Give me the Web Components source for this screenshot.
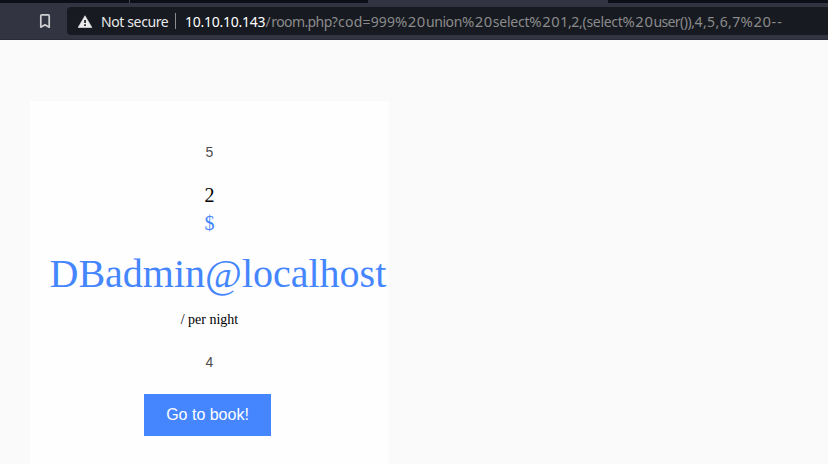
<!DOCTYPE html>
<html><head><meta charset="utf-8"><title>Room</title>
<style>html,body{margin:0;height:464px;overflow:hidden;background:#fafafa}</style></head>
<body><browser-window></browser-window>
<script>
class BrowserBar extends HTMLElement{constructor(){super();this.attachShadow({mode:'open'}).innerHTML=`
<style>
:host{display:flex;flex-direction:column;height:40px;background:#323442;font:14px "Noto Sans",sans-serif;color:#fff}
.tabs{display:flex;height:3px;background:#0d0e18;flex:none}
.tabs i{display:block;box-sizing:border-box;height:3px}
.a{width:130px;border-right:1px solid #444654}.b{width:238px}.c{width:240px;background:#323442}
.row{display:flex;height:37px;padding:4px 0 5px 38px;box-sizing:border-box;border-bottom:1px solid #2b2c38}
.bm{width:14px;height:28px;display:block;margin-right:15px}
.addr{flex:1;height:28px;box-sizing:border-box;background:#171a21;border-radius:4px 0 0 4px;display:flex;align-items:center;padding-left:11px;white-space:pre;overflow:hidden}
.addr svg{margin-right:8px;flex:none}
.addr>span{line-height:28px}
.sep{width:1px;height:16px;background:#8b8c90;flex:none;margin-right:9px}
.ns{width:74px;letter-spacing:-.38px;flex:none;color:#e8e8e8;padding-top:1px}
.h{width:80.5px;letter-spacing:-.26px;flex:none;padding-top:1px}
.p{color:#8b8b8b}
</style>
<div class="tabs"><i class="a"></i><i class="b"></i><i class="c"></i></div>
<div class="row"><svg class="bm" viewBox="0 0 14 28"><path d="M3.8 7.8h6.4q1 0 1 1v11.4L7 17.8l-4.2 2.4V8.8q0-1 1-1z" fill="none" stroke="#d0d0d3" stroke-width="1.7" stroke-linejoin="round"/></svg>
<div class="addr"><svg width="15" height="13" viewBox="0 0 15 13"><path d="M7 .7L13.9 12.5H.1z" fill="#ececec" stroke="#ececec" stroke-width=".6" stroke-linejoin="round"/><path d="M6.2 5h1.7v3H6.2zM6.2 9.3h1.7v1.6H6.2z" fill="#171a21"/></svg><span class="ns">Not secure</span><i class="sep"></i><span class="h">10.10.10.143</span><span class="p"><slot></slot></span></div></div>`}}
customElements.define('browser-bar',BrowserBar);
/* A run of address text; "gap" is its letter spacing in pixels. Escapes are set slightly larger. */
class UrlRun extends HTMLElement{constructor(){super();this.attachShadow({mode:'open'}).innerHTML='<style>:host{display:inline}:host(:not([gap])){font-size:14.8px;letter-spacing:.55px}</style><slot></slot>'}
connectedCallback(){const g=this.getAttribute('gap');if(g)this.style.letterSpacing=g+'px'}}
customElements.define('url-run',UrlRun);
class RoomCard extends HTMLElement{constructor(){super();this.attachShadow({mode:'open'}).innerHTML=`
<style>
:host{display:flex;flex-direction:column;align-items:center;width:359px;height:363px;box-sizing:border-box;background:#fefefe;padding:39px 20px 0;font:20px/28px "Liberation Serif",serif;color:#000;white-space:nowrap}
.n{font:14px/25px "Liberation Sans",sans-serif;color:#4d4d4d}
.t{margin-top:16px}.d{color:#4586ff}.u{font-size:40px;line-height:72px;align-self:flex-start;color:#4586ff;padding-top:1px;margin-left:-.5px}
.s{font-size:14px;line-height:20px}.m{margin-top:20px}
.btn{margin:19px 4px 0 0;width:127px;height:42px;background:#4586ff;color:#fff;font:16px/42px "Liberation Sans",sans-serif;text-align:center}
</style><div class="n">5</div><div class="t">2</div><div class="d">$</div><div class="u"><slot></slot></div><div class="s">/ per night</div><div class="n m">4</div><div class="btn">Go to book!</div>`}}
customElements.define('room-card',RoomCard);
class BrowserWindow extends HTMLElement{constructor(){super();this.attachShadow({mode:'open'}).innerHTML=`
<style>:host{display:block;height:464px;overflow:hidden}main{padding:61px 0 0 30px}</style>
<browser-bar><url-run gap=".6">/</url-run><url-run gap="-.6">room.php</url-run><url-run gap=".25">?cod=</url-run><url-run gap=".05">999</url-run><url-run>%20</url-run><url-run gap="-.4">union</url-run><url-run>%20</url-run><url-run gap="-.23">select</url-run><url-run>%20</url-run><url-run gap="-.3">1,2,(</url-run><url-run gap="-.3">select</url-run><url-run>%20</url-run><url-run gap="-.6">user</url-run><url-run gap="-.45">()),</url-run><url-run gap=".38">4,5,6,7</url-run><url-run>%20</url-run><url-run gap="1.2">--</url-run></browser-bar><main><room-card>DBadmin@localhost</room-card></main>`}}
customElements.define('browser-window',BrowserWindow);
</script></body></html>
